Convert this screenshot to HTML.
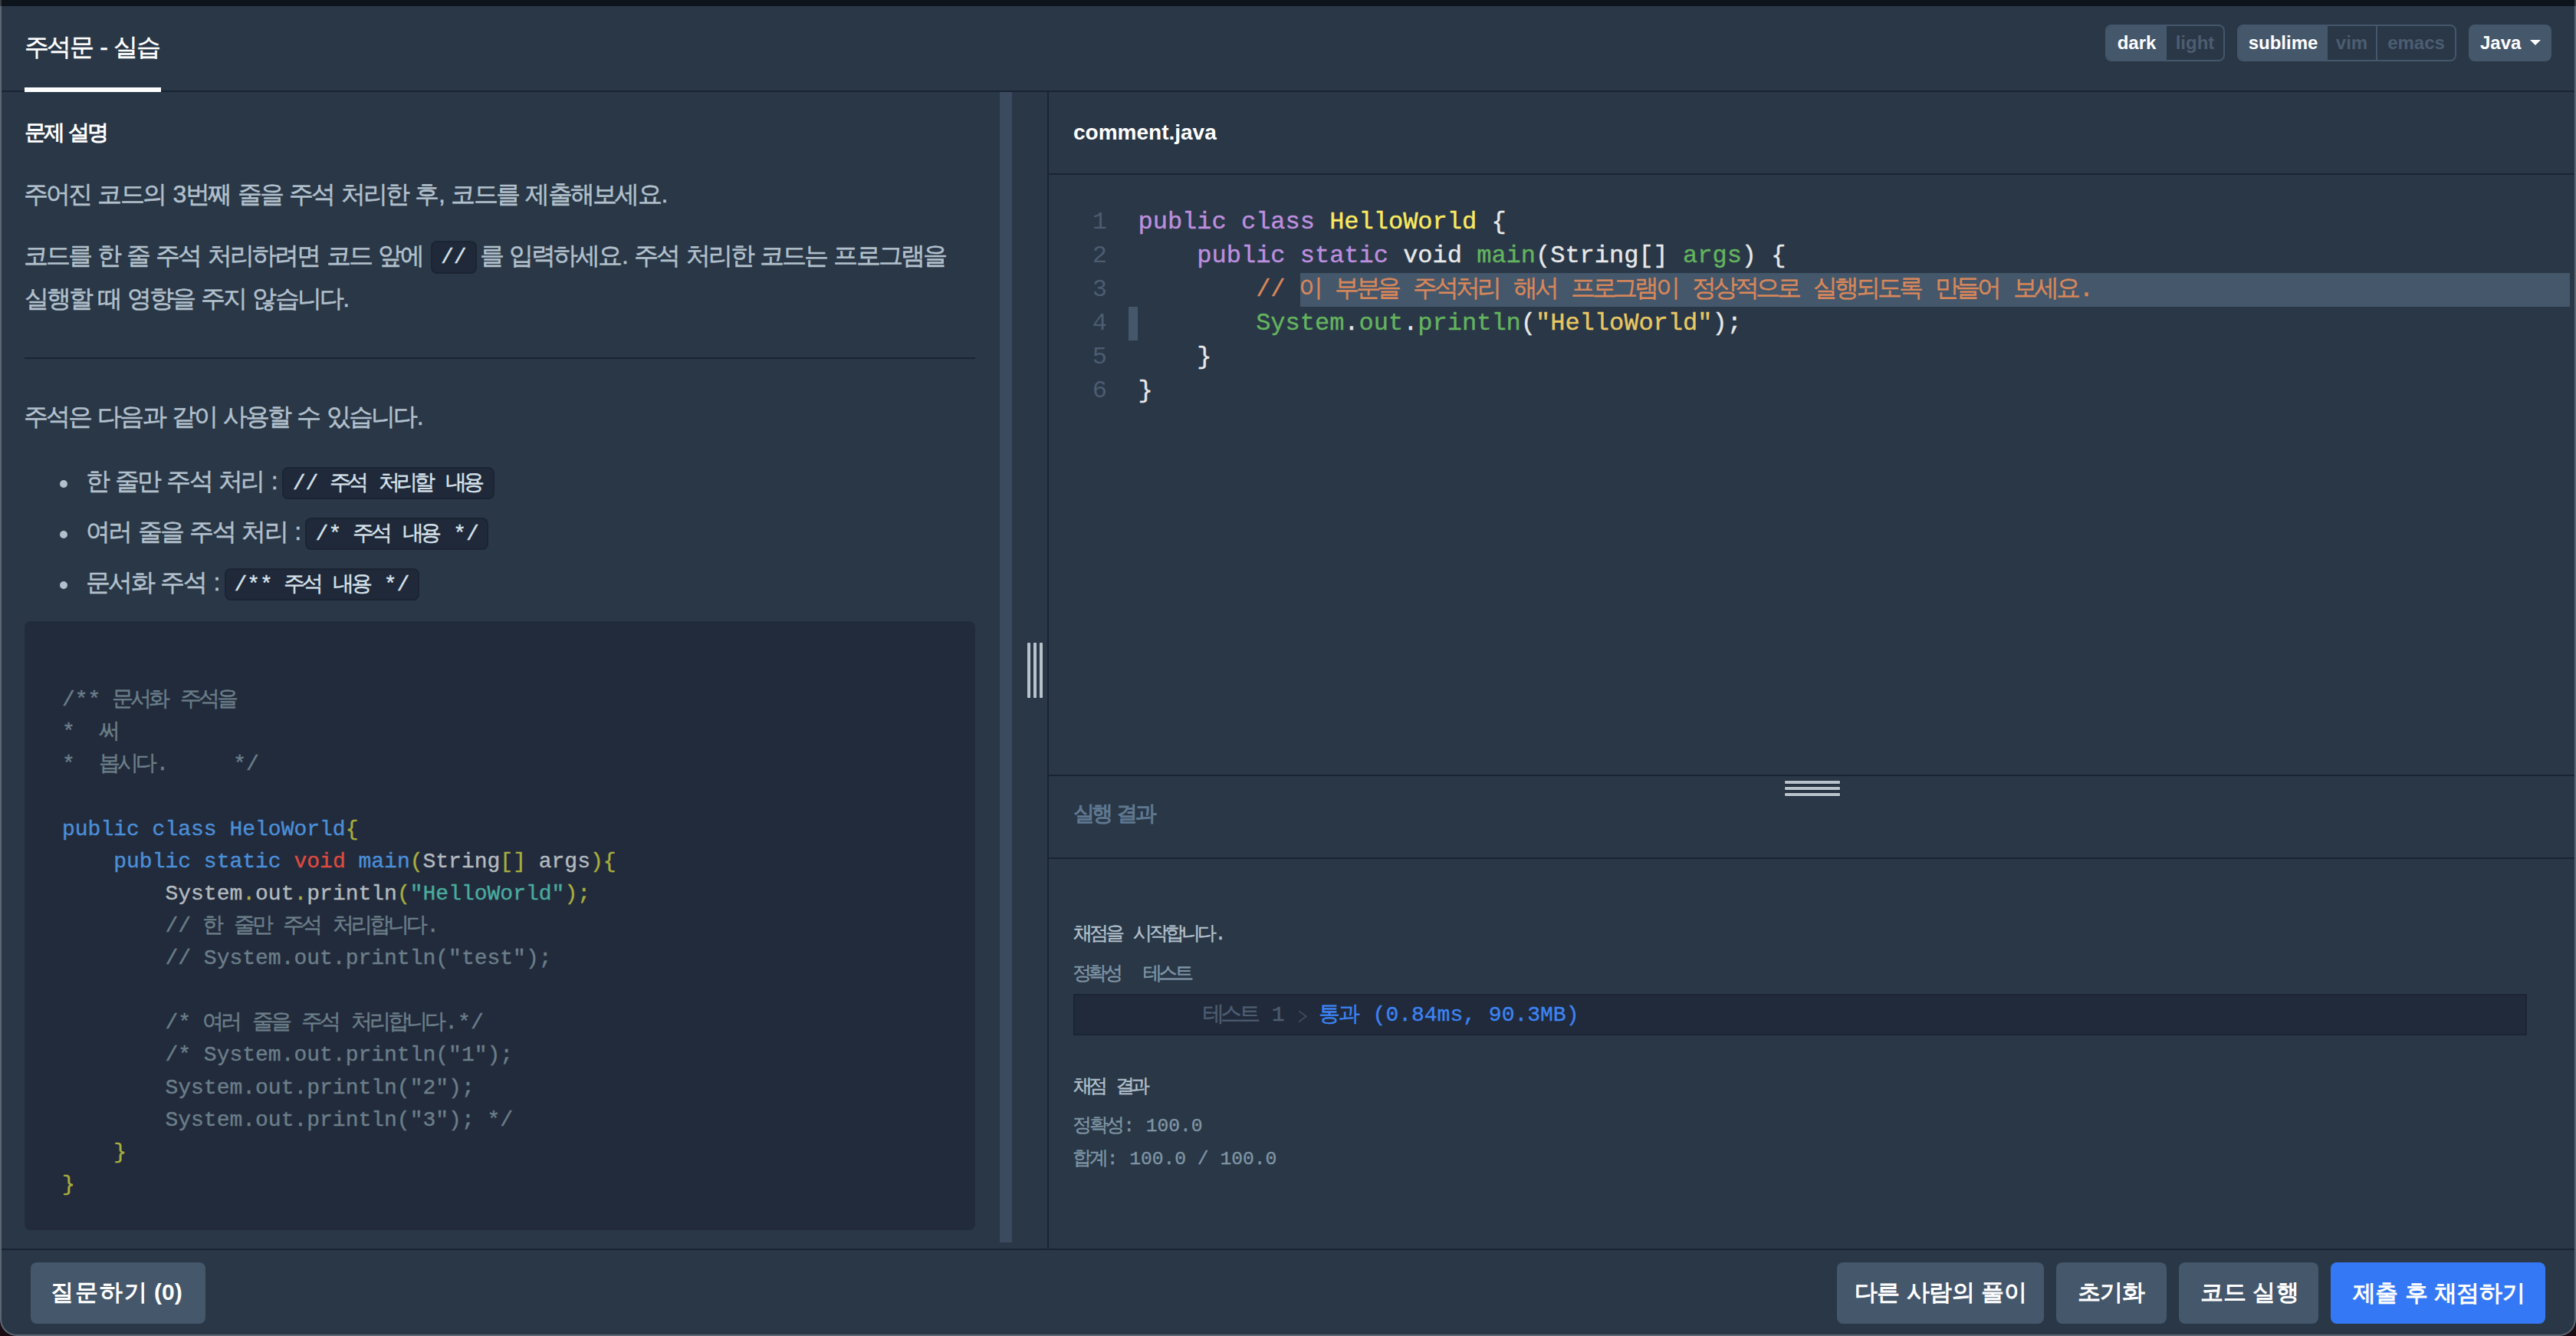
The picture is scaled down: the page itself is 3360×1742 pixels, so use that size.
<!DOCTYPE html>
<html><head><meta charset="utf-8"><style>
html,body{margin:0;padding:0;width:3360px;height:1742px;overflow:hidden;background:#1a0c12}
#win{position:absolute;left:0;top:0;width:3360px;height:1742px;background:#293747;border-radius:0 0 22px 22px;overflow:hidden;box-shadow:inset 0 0 0 2px #5b6672}
#in{position:absolute;left:0;top:0;width:3360px;height:1742px}
.t,.b,.grp,.javab,.btn,.dot{position:absolute}
.t{white-space:pre;font-family:"Liberation Sans",sans-serif;line-height:40px}
.title{color:#fff;-webkit-text-stroke:0.5px #fff}
.h2{color:#fff;font-weight:bold}
.h3{color:#5f7890;font-weight:bold}
.p{color:#b2c0cc;-webkit-text-stroke:0.5px #b2c0cc}
.ic{font-family:"Liberation Mono",monospace;font-size:28px;color:#d7e2eb;-webkit-text-stroke:0.4px currentColor}
.dot{width:10px;height:10px;border-radius:50%;background:#b2c0cc}
.mono{font-family:"Liberation Mono",monospace;font-size:28px;line-height:42px;-webkit-text-stroke:0.4px currentColor}
.cc{color:#6b7e88} .ck{color:#4b8fd8} .cy{color:#aaae3c} .cr{color:#de4a3f} .cg{color:#b3babf} .cs{color:#4aab9f} .cp{color:#b3babf}
.fname{color:#fff;font-weight:bold}
.lnum{font-family:"Liberation Mono",monospace;font-size:32px;line-height:44px;color:#4d5c70;text-align:right}
.emono{font-family:"Liberation Mono",monospace;font-size:32px;line-height:44px;-webkit-text-stroke:0.4px currentColor}
.ekw{color:#bd8fde} .ecls{color:#fbe960} .ew{color:#e8e8e8} .egr{color:#64b35e} .ecm,.ecmsel{color:#d8875a} .estr{color:#e8c862}
.rmono{font-family:"Liberation Mono",monospace;line-height:36px;-webkit-text-stroke:0.4px currentColor}
.rl{color:#b2c0cc} .rg{color:#7f95a4} .rmono.h3x{}
.grp{box-sizing:border-box;border:2px solid #44576b;border-radius:8px;overflow:hidden;display:flex}
.seg{box-sizing:border-box;height:44px;line-height:44px;text-align:center;font-family:"Liberation Sans",sans-serif;font-size:24px;font-weight:bold}
.seg.on{background:#44576b;color:#fff}
.seg.off{color:#4d5d71}
.javab{box-sizing:border-box;background:#44576b;border-radius:8px;font-family:"Liberation Sans",sans-serif;font-size:24px;font-weight:bold;color:#fff;line-height:48px;padding-left:15px}
.caret{position:absolute;left:80px;top:20px;width:0;height:0;border-left:7px solid transparent;border-right:7px solid transparent;border-top:7px solid #fff}
.btn{box-sizing:border-box;border-radius:8px}
.btnt{color:#fff;font-weight:bold}
</style></head>
<body><div id="win"><div id="in">
<div class="b" style="left:0px;top:0px;width:3360px;height:8px;background:#0e141c"></div>
<div class="b" style="left:0px;top:0px;width:2px;height:8px;background:#3a3d42"></div>
<div class="b" style="left:3358px;top:0px;width:2px;height:8px;background:#3a3d42"></div>
<div class="b" style="left:2px;top:118px;width:3356px;height:2px;background:#1a2333"></div>
<div class="t title" style="left:32.8px;top:40.8px;font-size:32px;"><span style="letter-spacing:-2.50px;margin-left:-1.25px;margin-right:1.25px">주석문</span> - <span style="letter-spacing:-2.50px;margin-left:-1.25px;margin-right:1.25px">실습</span></div>
<div class="b" style="left:32px;top:114px;width:178px;height:6px;background:#fff"></div>
<div class="grp" style="left:2746px;top:32px;width:156px;height:48px">
<div class="seg on" style="width:78px">dark</div><div class="seg off" style="width:74px">light</div></div>
<div class="grp" style="left:2918px;top:32px;width:286px;height:48px">
<div class="seg on" style="width:116px">sublime</div><div class="seg off" style="width:65px;border-right:2px solid #44576b">vim</div><div class="seg off" style="width:101px">emacs</div></div>
<div class="javab" style="left:3220px;top:32px;width:108px;height:48px"><span>Java</span><i class="caret"></i></div>
<div class="t h2" style="left:33.6px;top:153.4px;font-size:28px;"><span style="letter-spacing:-3.20px;margin-left:-1.60px;margin-right:1.60px">문제</span> <span style="letter-spacing:-3.20px;margin-left:-1.60px;margin-right:1.60px">설명</span></div>
<div class="t p" style="left:32.0px;top:233.2px;font-size:32px;"><span style="letter-spacing:-2.70px;margin-left:-1.35px;margin-right:1.35px">주어진</span> <span style="letter-spacing:-2.70px;margin-left:-1.35px;margin-right:1.35px">코드의</span> 3<span style="letter-spacing:-2.70px;margin-left:-1.35px;margin-right:1.35px">번째</span> <span style="letter-spacing:-2.70px;margin-left:-1.35px;margin-right:1.35px">줄을</span> <span style="letter-spacing:-2.70px;margin-left:-1.35px;margin-right:1.35px">주석</span> <span style="letter-spacing:-2.70px;margin-left:-1.35px;margin-right:1.35px">처리한</span> <span style="letter-spacing:-2.70px;margin-left:-1.35px;margin-right:1.35px">후</span>, <span style="letter-spacing:-2.70px;margin-left:-1.35px;margin-right:1.35px">코드를</span> <span style="letter-spacing:-2.70px;margin-left:-1.35px;margin-right:1.35px">제출해보세요</span>.</div>
<div class="t p" style="left:32.0px;top:313.2px;font-size:32px;"><span style="letter-spacing:-2.80px;margin-left:-1.40px;margin-right:1.40px">코드를</span> <span style="letter-spacing:-2.80px;margin-left:-1.40px;margin-right:1.40px">한</span> <span style="letter-spacing:-2.80px;margin-left:-1.40px;margin-right:1.40px">줄</span> <span style="letter-spacing:-2.80px;margin-left:-1.40px;margin-right:1.40px">주석</span> <span style="letter-spacing:-2.80px;margin-left:-1.40px;margin-right:1.40px">처리하려면</span> <span style="letter-spacing:-2.80px;margin-left:-1.40px;margin-right:1.40px">코드</span> <span style="letter-spacing:-2.80px;margin-left:-1.40px;margin-right:1.40px">앞에</span></div>
<div class="b" style="left:562px;top:314px;width:60px;height:43px;background:#1f2939;border:2px solid #1b2432;border-radius:8px;box-sizing:border-box"></div>
<div class="t ic" style="left:575px;top:316px">//</div>
<div class="t p" style="left:627.0px;top:313.2px;font-size:32px;"><span style="letter-spacing:-2.83px;margin-left:-1.42px;margin-right:1.42px">를</span> <span style="letter-spacing:-2.83px;margin-left:-1.42px;margin-right:1.42px">입력하세요</span>. <span style="letter-spacing:-2.83px;margin-left:-1.42px;margin-right:1.42px">주석</span> <span style="letter-spacing:-2.83px;margin-left:-1.42px;margin-right:1.42px">처리한</span> <span style="letter-spacing:-2.83px;margin-left:-1.42px;margin-right:1.42px">코드는</span> <span style="letter-spacing:-2.83px;margin-left:-1.42px;margin-right:1.42px">프로그램을</span></div>
<div class="t p" style="left:33.6px;top:369.2px;font-size:32px;"><span style="letter-spacing:-2.92px;margin-left:-1.46px;margin-right:1.46px">실행할</span> <span style="letter-spacing:-2.92px;margin-left:-1.46px;margin-right:1.46px">때</span> <span style="letter-spacing:-2.92px;margin-left:-1.46px;margin-right:1.46px">영향을</span> <span style="letter-spacing:-2.92px;margin-left:-1.46px;margin-right:1.46px">주지</span> <span style="letter-spacing:-2.92px;margin-left:-1.46px;margin-right:1.46px">않습니다</span>.</div>
<div class="b" style="left:32px;top:466px;width:1240px;height:2px;background:#1a2333"></div>
<div class="t p" style="left:32.0px;top:523.2px;font-size:32px;"><span style="letter-spacing:-2.80px;margin-left:-1.40px;margin-right:1.40px">주석은</span> <span style="letter-spacing:-2.80px;margin-left:-1.40px;margin-right:1.40px">다음과</span> <span style="letter-spacing:-2.80px;margin-left:-1.40px;margin-right:1.40px">같이</span> <span style="letter-spacing:-2.80px;margin-left:-1.40px;margin-right:1.40px">사용할</span> <span style="letter-spacing:-2.80px;margin-left:-1.40px;margin-right:1.40px">수</span> <span style="letter-spacing:-2.80px;margin-left:-1.40px;margin-right:1.40px">있습니다</span>.</div>
<div class="dot" style="left:78px;top:626px"></div>
<div class="t p" style="left:113.0px;top:607.2px;font-size:32px;"><span style="letter-spacing:-2.69px;margin-left:-1.34px;margin-right:1.34px">한</span> <span style="letter-spacing:-2.69px;margin-left:-1.34px;margin-right:1.34px">줄만</span> <span style="letter-spacing:-2.69px;margin-left:-1.34px;margin-right:1.34px">주석</span> <span style="letter-spacing:-2.69px;margin-left:-1.34px;margin-right:1.34px">처리</span> :</div>
<div class="b" style="left:368px;top:609px;width:277px;height:42px;background:#1f2939;border:2px solid #1b2432;border-radius:8px;box-sizing:border-box"></div>
<div class="t ic" style="left:381.7px;top:611.2px;font-size:28px;">// <span style="letter-spacing:-4.57px;margin-left:-2.29px;margin-right:2.29px">주석</span> <span style="letter-spacing:-4.57px;margin-left:-2.29px;margin-right:2.29px">처리할</span> <span style="letter-spacing:-4.57px;margin-left:-2.29px;margin-right:2.29px">내용</span></div>
<div class="dot" style="left:78px;top:692px"></div>
<div class="t p" style="left:113.0px;top:673.2px;font-size:32px;"><span style="letter-spacing:-2.54px;margin-left:-1.27px;margin-right:1.27px">여러</span> <span style="letter-spacing:-2.54px;margin-left:-1.27px;margin-right:1.27px">줄을</span> <span style="letter-spacing:-2.54px;margin-left:-1.27px;margin-right:1.27px">주석</span> <span style="letter-spacing:-2.54px;margin-left:-1.27px;margin-right:1.27px">처리</span> :</div>
<div class="b" style="left:398px;top:675px;width:239px;height:42px;background:#1f2939;border:2px solid #1b2432;border-radius:8px;box-sizing:border-box"></div>
<div class="t ic" style="left:411.6px;top:677.2px;font-size:28px;">/* <span style="letter-spacing:-4.12px;margin-left:-2.06px;margin-right:2.06px">주석</span> <span style="letter-spacing:-4.12px;margin-left:-2.06px;margin-right:2.06px">내용</span> */</div>
<div class="dot" style="left:78px;top:758px"></div>
<div class="t p" style="left:113.0px;top:739.2px;font-size:32px;"><span style="letter-spacing:-2.48px;margin-left:-1.24px;margin-right:1.24px">문서화</span> <span style="letter-spacing:-2.48px;margin-left:-1.24px;margin-right:1.24px">주석</span> :</div>
<div class="b" style="left:293px;top:741px;width:254px;height:42px;background:#1f2939;border:2px solid #1b2432;border-radius:8px;box-sizing:border-box"></div>
<div class="t ic" style="left:305.4px;top:743.2px;font-size:28px;">/** <span style="letter-spacing:-4.40px;margin-left:-2.20px;margin-right:2.20px">주석</span> <span style="letter-spacing:-4.40px;margin-left:-2.20px;margin-right:2.20px">내용</span> */</div>
<div class="b" style="left:32px;top:810px;width:1240px;height:794px;background:#222b3c;border-radius:8px"></div>
<div class="t mono" style="left:81px;top:892.0px"><span class="cc">/** <span style="letter-spacing:-4.00px;margin-left:-2.00px;margin-right:2.00px">문서화</span> <span style="letter-spacing:-4.00px;margin-left:-2.00px;margin-right:2.00px">주석을</span></span></div>
<div class="t mono" style="left:81px;top:934.1px"><span class="cc">*  <span style="letter-spacing:-4.00px;margin-left:-2.00px;margin-right:2.00px">써</span></span></div>
<div class="t mono" style="left:81px;top:976.3px"><span class="cc">*  <span style="letter-spacing:-4.00px;margin-left:-2.00px;margin-right:2.00px">봅시다</span>.     */</span></div>
<div class="t mono" style="left:81px;top:1018.4px"></div>
<div class="t mono" style="left:81px;top:1060.5px"><span class="ck">public class HeloWorld</span><span class="cy">{</span></div>
<div class="t mono" style="left:81px;top:1102.7px"><span class="cp">    </span><span class="ck">public static </span><span class="cr">void </span><span class="ck">main</span><span class="cy">(</span><span class="cg">String</span><span class="cy">[]</span><span class="cg"> args</span><span class="cy">){</span></div>
<div class="t mono" style="left:81px;top:1144.8px"><span class="cp">        </span><span class="cg">System</span><span class="cy">.</span><span class="cg">out</span><span class="cy">.</span><span class="cg">println</span><span class="cy">(</span><span class="cs">&quot;HelloWorld&quot;</span><span class="cy">);</span></div>
<div class="t mono" style="left:81px;top:1186.9px"><span class="cc">        // <span style="letter-spacing:-4.00px;margin-left:-2.00px;margin-right:2.00px">한</span> <span style="letter-spacing:-4.00px;margin-left:-2.00px;margin-right:2.00px">줄만</span> <span style="letter-spacing:-4.00px;margin-left:-2.00px;margin-right:2.00px">주석</span> <span style="letter-spacing:-4.00px;margin-left:-2.00px;margin-right:2.00px">처리합니다</span>.</span></div>
<div class="t mono" style="left:81px;top:1229.0px"><span class="cc">        // System.out.println(&quot;test&quot;);</span></div>
<div class="t mono" style="left:81px;top:1271.2px"></div>
<div class="t mono" style="left:81px;top:1313.3px"><span class="cc">        /* <span style="letter-spacing:-4.00px;margin-left:-2.00px;margin-right:2.00px">여러</span> <span style="letter-spacing:-4.00px;margin-left:-2.00px;margin-right:2.00px">줄을</span> <span style="letter-spacing:-4.00px;margin-left:-2.00px;margin-right:2.00px">주석</span> <span style="letter-spacing:-4.00px;margin-left:-2.00px;margin-right:2.00px">처리합니다</span>.*/</span></div>
<div class="t mono" style="left:81px;top:1355.4px"><span class="cc">        /* System.out.println(&quot;1&quot;);</span></div>
<div class="t mono" style="left:81px;top:1397.6px"><span class="cc">        System.out.println(&quot;2&quot;);</span></div>
<div class="t mono" style="left:81px;top:1439.7px"><span class="cc">        System.out.println(&quot;3&quot;); */</span></div>
<div class="t mono" style="left:81px;top:1481.8px"><span class="cy">    }</span></div>
<div class="t mono" style="left:81px;top:1524.0px"><span class="cy">}</span></div>
<div class="b" style="left:1304px;top:120px;width:16px;height:1500px;background:#3b4a5e"></div>
<div class="b" style="left:1340px;top:838px;width:4px;height:72px;background:#b8c2ca;border-radius:1px"></div>
<div class="b" style="left:1348px;top:838px;width:4px;height:72px;background:#b8c2ca;border-radius:1px"></div>
<div class="b" style="left:1356px;top:838px;width:4px;height:72px;background:#b8c2ca;border-radius:1px"></div>
<div class="b" style="left:1366px;top:120px;width:2px;height:1509px;background:#1a2333"></div>
<div class="t fname" style="left:1400.0px;top:153.4px;font-size:28px;">comment.java</div>
<div class="b" style="left:1368px;top:226px;width:1990px;height:2px;background:#1a2333"></div>
<div class="b" style="left:1696px;top:356px;width:1656px;height:44px;background:#44576b"></div>
<div class="b" style="left:1472px;top:400px;width:12px;height:44px;background:#44576b"></div>
<div class="t lnum" style="left:1400px;top:268px;width:44px">1</div>
<div class="t emono" style="left:1484.5px;top:268px"><span class="ekw">public class </span><span class="ecls">HelloWorld</span><span class="ew"> {</span></div>
<div class="t lnum" style="left:1400px;top:312px;width:44px">2</div>
<div class="t emono" style="left:1484.5px;top:312px"><span class="ew">    </span><span class="ekw">public static </span><span class="ew">void </span><span class="egr">main</span><span class="ew">(String[] </span><span class="egr">args</span><span class="ew">) {</span></div>
<div class="t lnum" style="left:1400px;top:356px;width:44px">3</div>
<div class="t emono" style="left:1484.5px;top:356px"><span class="ew">        </span><span class="ecm">// </span><span class="ecmsel"><span style="letter-spacing:-4.18px;margin-left:-2.09px;margin-right:2.09px">이</span> <span style="letter-spacing:-4.18px;margin-left:-2.09px;margin-right:2.09px">부분을</span> <span style="letter-spacing:-4.18px;margin-left:-2.09px;margin-right:2.09px">주석처리</span> <span style="letter-spacing:-4.18px;margin-left:-2.09px;margin-right:2.09px">해서</span> <span style="letter-spacing:-4.18px;margin-left:-2.09px;margin-right:2.09px">프로그램이</span> <span style="letter-spacing:-4.18px;margin-left:-2.09px;margin-right:2.09px">정상적으로</span> <span style="letter-spacing:-4.18px;margin-left:-2.09px;margin-right:2.09px">실행되도록</span> <span style="letter-spacing:-4.18px;margin-left:-2.09px;margin-right:2.09px">만들어</span> <span style="letter-spacing:-4.18px;margin-left:-2.09px;margin-right:2.09px">보세요</span>.</span></div>
<div class="t lnum" style="left:1400px;top:400px;width:44px">4</div>
<div class="t emono" style="left:1484.5px;top:400px"><span class="ew">        </span><span class="egr">System</span><span class="ew">.</span><span class="egr">out</span><span class="ew">.</span><span class="egr">println</span><span class="ew">(</span><span class="estr">&quot;HelloWorld&quot;</span><span class="ew">);</span></div>
<div class="t lnum" style="left:1400px;top:444px;width:44px">5</div>
<div class="t emono" style="left:1484.5px;top:444px"><span class="ew">    }</span></div>
<div class="t lnum" style="left:1400px;top:488px;width:44px">6</div>
<div class="t emono" style="left:1484.5px;top:488px"><span class="ew">}</span></div>
<div class="b" style="left:1368px;top:1010px;width:1990px;height:2px;background:#1a2333"></div>
<div class="b" style="left:2328px;top:1018px;width:72px;height:4px;background:#b8c2ca;border-radius:1px;box-shadow:0 0 0 1px #202b3b"></div>
<div class="b" style="left:2328px;top:1026px;width:72px;height:4px;background:#b8c2ca;border-radius:1px;box-shadow:0 0 0 1px #202b3b"></div>
<div class="b" style="left:2328px;top:1034px;width:72px;height:4px;background:#b8c2ca;border-radius:1px;box-shadow:0 0 0 1px #202b3b"></div>
<div class="t h3" style="left:1401.6px;top:1041.2px;font-size:28px;"><span style="letter-spacing:-3.60px;margin-left:-1.80px;margin-right:1.80px">실행</span> <span style="letter-spacing:-3.60px;margin-left:-1.80px;margin-right:1.80px">결과</span></div>
<div class="b" style="left:1368px;top:1118px;width:1990px;height:2px;background:#1a2333"></div>
<div class="t rmono rl" style="left:1401.6px;top:1200.8px;font-size:25px;"><span style="letter-spacing:-4.00px;margin-left:-2.00px;margin-right:2.00px">채점을</span> <span style="letter-spacing:-4.00px;margin-left:-2.00px;margin-right:2.00px">시작합니다</span>.</div>
<div class="t rmono rg" style="left:1400.8px;top:1252.8px;font-size:25px;"><span style="letter-spacing:-4.33px;margin-left:-2.17px;margin-right:2.17px">정확성</span>  <span style="letter-spacing:-4.33px;margin-left:-2.17px;margin-right:2.17px">테스트</span></div>
<div class="b" style="left:1400px;top:1296px;width:1896px;height:54px;background:#202a3a;border:2px solid #1b2433;box-sizing:border-box"></div>
<div class="t rmono" style="left:1570.8px;top:1305.8px;font-size:28px;color:#4e5d71"><span style="letter-spacing:-4.27px;margin-left:-2.13px;margin-right:2.13px">테스트</span> 1</div>
<svg class="b" style="left:1690px;top:1314px" width="20" height="24" viewBox="0 0 20 24"><polyline points="4.2,4.3 13.7,11.3 4.2,18.4" fill="none" stroke="#3a495c" stroke-width="2"/></svg>
<div class="t rmono" style="left:1720.2px;top:1305.8px;font-size:28px;color:#3d84f3"><span style="letter-spacing:-1.20px;margin-left:-0.60px;margin-right:0.60px">통과</span> (0.84ms, 90.3MB)</div>
<div class="t rmono rl" style="left:1402.4px;top:1399.8px;font-size:25px;"><span style="letter-spacing:-5.00px;margin-left:-2.50px;margin-right:2.50px">채점</span> <span style="letter-spacing:-5.00px;margin-left:-2.50px;margin-right:2.50px">결과</span></div>
<div class="t rmono rg" style="left:1400.8px;top:1450.8px;font-size:24.6px;"><span style="letter-spacing:-3.50px;margin-left:-1.75px;margin-right:1.75px">정확성</span>: 100.0</div>
<div class="t rmono rg" style="left:1400.8px;top:1493.8px;font-size:24.6px;"><span style="letter-spacing:-3.50px;margin-left:-1.75px;margin-right:1.75px">합계</span>: 100.0 / 100.0</div>
<div class="b" style="left:2px;top:1628px;width:3356px;height:2px;background:#1a2333"></div>
<div class="btn" style="left:40px;top:1646px;width:228px;height:80px;background:#44576b"></div>
<div class="t btnt" style="left:64.6px;top:1664.8px;font-size:30px;"><span style="letter-spacing:2.02px;margin-left:1.01px;margin-right:-1.01px">질문하기</span> (0)</div>
<div class="btn" style="left:2396px;top:1646px;width:270px;height:80px;background:#44576b"></div>
<div class="t btnt" style="left:2418.9px;top:1665.2px;font-size:30px;"><span style="letter-spacing:-0.29px;margin-left:-0.14px;margin-right:0.14px">다른</span> <span style="letter-spacing:-0.29px;margin-left:-0.14px;margin-right:0.14px">사람의</span> <span style="letter-spacing:-0.29px;margin-left:-0.14px;margin-right:0.14px">풀이</span></div>
<div class="btn" style="left:2682px;top:1646px;width:144px;height:80px;background:#44576b"></div>
<div class="t btnt" style="left:2710.8px;top:1665.2px;font-size:30px;"><span style="letter-spacing:-1.23px;margin-left:-0.62px;margin-right:0.62px">초기화</span></div>
<div class="btn" style="left:2842px;top:1646px;width:182px;height:80px;background:#44576b"></div>
<div class="t btnt" style="left:2869.7px;top:1665.2px;font-size:30px;"><span style="letter-spacing:0.14px;margin-left:0.07px;margin-right:-0.07px">코드</span> <span style="letter-spacing:0.14px;margin-left:0.07px;margin-right:-0.07px">실행</span></div>
<div class="btn" style="left:3040px;top:1646px;width:280px;height:80px;background:#3478f6"></div>
<div class="t btnt" style="left:3068.8px;top:1666.0px;font-size:30px;"><span style="letter-spacing:-0.24px;margin-left:-0.12px;margin-right:0.12px">제출</span> <span style="letter-spacing:-0.24px;margin-left:-0.12px;margin-right:0.12px">후</span> <span style="letter-spacing:-0.24px;margin-left:-0.12px;margin-right:0.12px">채점하기</span></div>
</div></div></body></html>
